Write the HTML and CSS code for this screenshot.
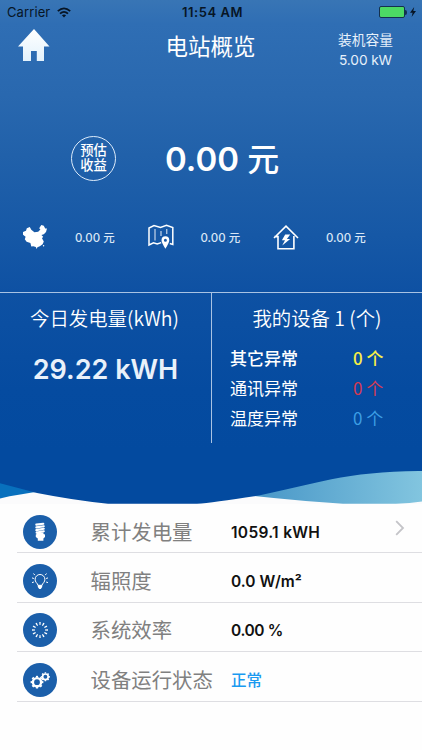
FILE: index.html
```html
<!DOCTYPE html>
<html lang="zh-CN">
<head>
  <meta charset="UTF-8" />
  <meta name="viewport" content="width=device-width, initial-scale=1" />
  <title>电站概览</title>
  <link rel="stylesheet" href="styles.css">
</head>

<body>
  <div class="hero">
    <div class="status-bar">
      <div class="carrier">
        <span>Carrier</span>
        <svg class="wifi" viewBox="0 0 14 11" fill="none" stroke="#071525" stroke-width="1.8">
          <path d="M0.8 4.2Q7-1.4 13.2 4.2" />
          <path d="M3 6.7Q7 3.1 11 6.7" />
          <path d="M4.9 8.3Q7 6.6 9.1 8.3L7 10.5Z" fill="#071525" stroke="none" />
        </svg>
      </div>
      <span class="time">11:54 AM</span>
      <div class="battery">
        <span class="battery-body"></span>
        <span class="battery-tip"></span>
        <svg class="bolt" viewBox="0 0 6 10"><path d="M4.2 0L0 5.8h2.6L1.6 10 6 4H3.3Z" /></svg>
      </div>
    </div>

    <div class="header">
      <svg class="home" viewBox="0 0 32 32">
        <defs>
          <linearGradient id="homeFill" x1="0" y1="0" x2="0" y2="1">
            <stop offset="0" stop-color="#ffffff" />
            <stop offset="1" stop-color="#e3f2fc" />
          </linearGradient>
        </defs>
        <path d="M16 0L31.5 17.5H26V32H18.8V22H13V32H5V17.5H0Z" fill="url(#homeFill)" />
      </svg>
      <h1 class="title">电站概览</h1>
      <div class="capacity">
        <div>装机容量</div>
        <div class="capacity-value">5.00 kW</div>
      </div>
    </div>

    <div class="income">
      <div class="income-badge"><span>预估</span><span>收益</span></div>
      <div class="income-total">0.00 <span class="unit">元</span></div>
    </div>

    <div class="stats">
      <div class="stat">
        <svg class="stat-icon" viewBox="0 0 26 26" fill="#fff">
          <path d="M1 8L4 6.8 4.8 4.2 7.8 3 9.3 5.8 12.4 8.2 16.2 7.8 18.4 5.4 17.2 4.2 19.3 1 21.8 1.8 23.2 4.6 25 4.4 24 8 21.8 10.2 19.4 11 21.2 12.7 20 14.3 21.8 17.4 20.6 20.3 17.8 22.3 15.4 23.3 14.7 25 13.8 23.1 11.3 22.3 9.3 22.6 8.4 19 4.6 17.8 2.8 15.2 3.6 12.8 1 10.8Z" />
          <circle cx="21.6" cy="21.8" r="0.7" />
        </svg>
        <span>0.00 元</span>
      </div>
      <div class="stat">
        <svg class="stat-icon" viewBox="0 0 26 26" fill="none" stroke="#fff" stroke-width="1.5">
          <path d="M13.2 18.6L9.2 20 5.5 18.9 1 21V4L6 1.6 12.5 3.5 18.5 1.3 24.8 3.6V20.5L21.8 19.5" />
          <path d="M7 5V16.5M13 7V12M18.8 5V10" stroke-width="0.9" />
          <path d="M17.4 24.7Q13.5 18.5 13.5 16.2A3.9 3.9 0 0 1 21.3 16.2Q21.3 18.5 17.4 24.7ZM17.4 14.7A1.5 1.5 0 1 0 17.4 17.7 1.5 1.5 0 1 0 17.4 14.7Z" fill="#fff" fill-rule="evenodd" stroke="none" />
        </svg>
        <span>0.00 元</span>
      </div>
      <div class="stat">
        <svg class="stat-icon" viewBox="0 0 26 26" fill="none" stroke="#fff" stroke-width="1.6">
          <path d="M1 14L13 2.2 25 14M1.4 12.6H5V24.8H20.9V12" />
          <path d="M12.2 10.4L8.9 16.2H12L9.2 21.6 17.2 15H13.9L17.2 10.4Z" fill="#fff" stroke="none" />
        </svg>
        <span>0.00 元</span>
      </div>
    </div>

    <div class="panels">
      <div class="panel panel-today">
        <div class="panel-title">今日发电量(kWh)</div>
        <div class="today-value">29.22 kWH</div>
      </div>
      <div class="panel">
        <div class="panel-title">我的设备 1 (个)</div>
        <div class="fault fault-other"><span>其它异常</span><span class="yellow">0 个</span></div>
        <div class="fault"><span>通讯异常</span><span class="red">0 个</span></div>
        <div class="fault"><span>温度异常</span><span class="blue">0 个</span></div>
      </div>
    </div>

    <svg class="wave" viewBox="0 0 422 44" preserveAspectRatio="none">
      <defs>
        <linearGradient id="waveRight" x1="0" y1="0" x2="1" y2="0">
          <stop offset="0" stop-color="#4594c6" />
          <stop offset="1" stop-color="#82c5df" />
        </linearGradient>
      </defs>
      <rect width="422" height="44" fill="#fbfbfc" />
      <path d="M0 20L45 31Q18 34 0 38.5Z" fill="#0870bd" />
      <path d="M245 35Q300 41 343 43.7H396Q410 43.2 422 41.5V8H340Z" fill="url(#waveRight)" />
      <path d="M0 0V23.3Q18 28 37 33Q75 40.5 108 43.7H197Q213 42.6 260 35.3C310 25 350 10.5 422 11V0Z" fill="#034a9f" />
    </svg>
  </div>

  <div class="list">
    <div class="row">
      <svg class="row-icon" viewBox="0 0 34 34">
        <circle cx="17" cy="17" r="17" fill="#1b5faa" />
        <path d="M13.3 9.6L20.3 8.8M13.3 12.4L20.8 11.2M13.3 15.1L20.8 13.8M13.6 17.6L20.8 16.3" stroke="#fff" stroke-width="2.1" stroke-linecap="round" />
        <path d="M13.8 17.4H20.5V19L22 19.6V22L20.4 23.6V25.8H14.8V23.6L12.8 22V19.6L13.8 19Z" fill="#fff" />
      </svg>
      <span class="row-label">累计发电量</span>
      <span class="row-value energy">1059.1 kWH</span>
      <svg class="arrow" viewBox="0 0 10 16" fill="none" stroke="#c4c4c8" stroke-width="1.8"><path d="M1.2 1.2L8 8 1.2 14.8" /></svg>
    </div>
    <div class="row">
      <svg class="row-icon" viewBox="0 0 34 34" fill="none" stroke="#fff" stroke-width="1">
        <circle cx="17" cy="17" r="17" fill="#1b5faa" stroke="none" />
        <path d="M14.9 21.3Q14.8 20 13.3 18.6A4.9 4.9 0 1 1 20.7 18.6Q19.2 20 19.1 21.3Z" />
        <path d="M14.8 21.2H19.2V23L17.8 25H16.2L14.8 23Z" fill="#fff" stroke="none" />
        <path d="M11.8 11.1L10.5 9.5M22.2 11.1L23.5 9.5M10.9 14.5L9 13.9M23.1 14.5L25 13.9M10.9 18L9 18.6M23.1 18L25 18.6" />
      </svg>
      <span class="row-label">辐照度</span>
      <span class="row-value">0.0 W/m²</span>
    </div>
    <div class="row">
      <svg class="row-icon" viewBox="0 0 34 34">
        <circle cx="17" cy="17" r="17" fill="#1b5faa" />
        <circle cx="17" cy="17" r="6.5" fill="none" stroke="#fff" stroke-width="3" pathLength="120" stroke-dasharray="3.8 6.2" stroke-dashoffset="1.9" />
      </svg>
      <span class="row-label">系统效率</span>
      <span class="row-value percent">0.00 %</span>
    </div>
    <div class="row">
      <svg class="row-icon" viewBox="0 0 34 34" fill="none" stroke="#fff">
        <circle cx="17" cy="17" r="17" fill="#1b5faa" stroke="none" />
        <circle cx="14" cy="19.2" r="4.1" stroke-width="2.4" />
        <circle cx="14" cy="19.2" r="5.6" stroke-width="1.6" pathLength="80" stroke-dasharray="5 5" stroke-dashoffset="2.5" />
        <circle cx="22.4" cy="13.8" r="2.8" stroke-width="1.7" />
        <circle cx="22.4" cy="13.8" r="3.9" stroke-width="1.3" pathLength="80" stroke-dasharray="5 5" stroke-dashoffset="2.5" />
      </svg>
      <span class="row-label">设备运行状态</span>
      <span class="row-value row-ok">正常</span>
    </div>
  </div>
</body>
</html>
```

FILE: styles.css
```css
* {
  box-sizing: border-box;
  margin: 0;
  padding: 0;
}

body {
  background-color: #fefefe;
  font-family: Inter, "Noto Sans CJK SC", sans-serif;
  color: #fff;
  white-space: nowrap;
  overflow: hidden;
}

svg {
  display: block;
  flex-shrink: 0;
}

.hero {
  height: 504px;
  display: flex;
  flex-direction: column;
  background: linear-gradient(#3875b5 0, #2f6eb4 24px, #2968af 95px, #2161aa 155px, #1658a6 235px, #0e51a3 292px, #054ba0 390px, #034a9f 450px);
}

/* status bar */
.status-bar {
  height: 24px;
  padding: 0 6px 0 7px;
  display: grid;
  grid-template-columns: 1fr auto 1fr;
  align-items: center;
  color: #071525;
  font-size: 13px;
  line-height: 24px;
}

.carrier {
  display: flex;
  align-items: center;
  gap: 7px;
  letter-spacing: 0.1px;
}

.wifi {
  width: 14px;
  height: 11px;
}

.time {
  padding-left: 2px;
  font-weight: 600;
  letter-spacing: 0.55px;
}

.battery {
  display: flex;
  align-items: center;
  justify-content: flex-end;
}

.battery-body {
  width: 26px;
  height: 12px;
  border: 1px solid #14304f;
  border-radius: 2px;
  background-color: #4cd964;
}

.battery-tip {
  width: 2px;
  height: 5px;
  background-color: #14304f;
  border-radius: 0 2px 2px 0;
}

.bolt {
  width: 6px;
  height: 10px;
  margin-left: 3px;
  fill: #071525;
}

/* header */
.header {
  height: 94px;
  padding: 5px 19px 0 18px;
  display: grid;
  grid-template-columns: 100px 1fr 100px;
}

.home {
  width: 32px;
  height: 32px;
}

.title {
  padding-top: 1px;
  font-size: 22.5px;
  font-weight: 400;
  line-height: 34px;
  text-align: center;
}

.capacity {
  padding: 1px 0 0 25px;
  font-size: 13.7px;
  line-height: 20px;
  text-align: center;
  color: #e6f0fa;
}

.capacity-value {
  letter-spacing: -0.1px;
}

/* income */
.income {
  height: 80px;
  padding-left: 71px;
  display: flex;
  align-items: center;
  gap: 49px;
}

.income-badge {
  width: 45px;
  height: 45px;
  border: 1.5px solid #dcebfa;
  border-radius: 50%;
  display: flex;
  flex-direction: column;
  align-items: center;
  justify-content: center;
  font-size: 13.3px;
  font-weight: 500;
  line-height: 15.5px;
}

.income-total {
  padding-bottom: 3px;
  font-size: 33px;
  font-weight: 600;
}

.unit {
  font-size: 32px;
  font-weight: 500;
}

.stats {
  height: 94px;
  padding: 24px 0 0 22px;
  display: grid;
  grid-template-columns: repeat(3, 125.5px);
}

.stat {
  height: 30px;
  display: flex;
  align-items: center;
  gap: 27px;
  font-size: 11.5px;
  font-weight: 500;
  color: #d9e6f5;
}

.stat-icon {
  width: 26px;
  height: 26px;
}

/* panels */
.panels {
  height: 168px;
  display: grid;
  grid-template-columns: 212px 1fr;
  align-items: start;
  border-top: 1.5px solid #a9c3e3;
}

.panel {
  height: 150px;
}

.panel-today {
  border-right: 1.5px solid #a9c3e3;
  text-align: center;
}

.panel-title {
  padding-top: 10px;
  font-family: "Noto Sans CJK SC", sans-serif;
  font-size: 19.4px;
  font-weight: 350;
  line-height: 30px;
  text-align: center;
}

.panel-today .panel-title {
  padding-right: 2px;
}

.today-value {
  padding-top: 19px;
  font-size: 27px;
  font-weight: 600;
  line-height: 36px;
  color: #e9f1fa;
}

.fault {
  height: 30px;
  padding-left: 18px;
  display: grid;
  grid-template-columns: 123px 1fr;
  align-items: center;
  font-family: "Noto Sans CJK SC", sans-serif;
  font-size: 17px;
  line-height: 30px;
}

.panel-title + .fault {
  margin-top: 10px;
}

.fault-other {
  font-weight: 500;
}

.yellow {
  color: #f7ee46;
}

.red {
  color: #d33a52;
}

.blue {
  color: #3c9ee5;
}

.wave {
  width: 100%;
  height: 44px;
}

/* list */
.list {
  padding: 0 0 0 17px;
}

.row {
  height: 49.4px;
  padding: 7px 17px 0 6px;
  display: grid;
  grid-template-columns: 67.5px 140.5px 1fr auto;
  align-items: center;
  border-bottom: 1px solid #dedee2;
}

.row-icon {
  width: 34px;
  height: 34px;
}

.row-label {
  padding-top: 2px;
  font-size: 20.4px;
  line-height: 30px;
  color: #808080;
}

.row-value {
  padding-top: 2px;
  font-size: 15.5px;
  font-weight: 600;
  line-height: 30px;
  color: #111;
}

.energy {
  letter-spacing: 0.3px;
}

.percent {
  letter-spacing: -0.4px;
}

.row-ok {
  font-weight: 500;
  color: #1a9af0;
}

.arrow {
  width: 10px;
  height: 16px;
  margin-bottom: 8px;
}
```
